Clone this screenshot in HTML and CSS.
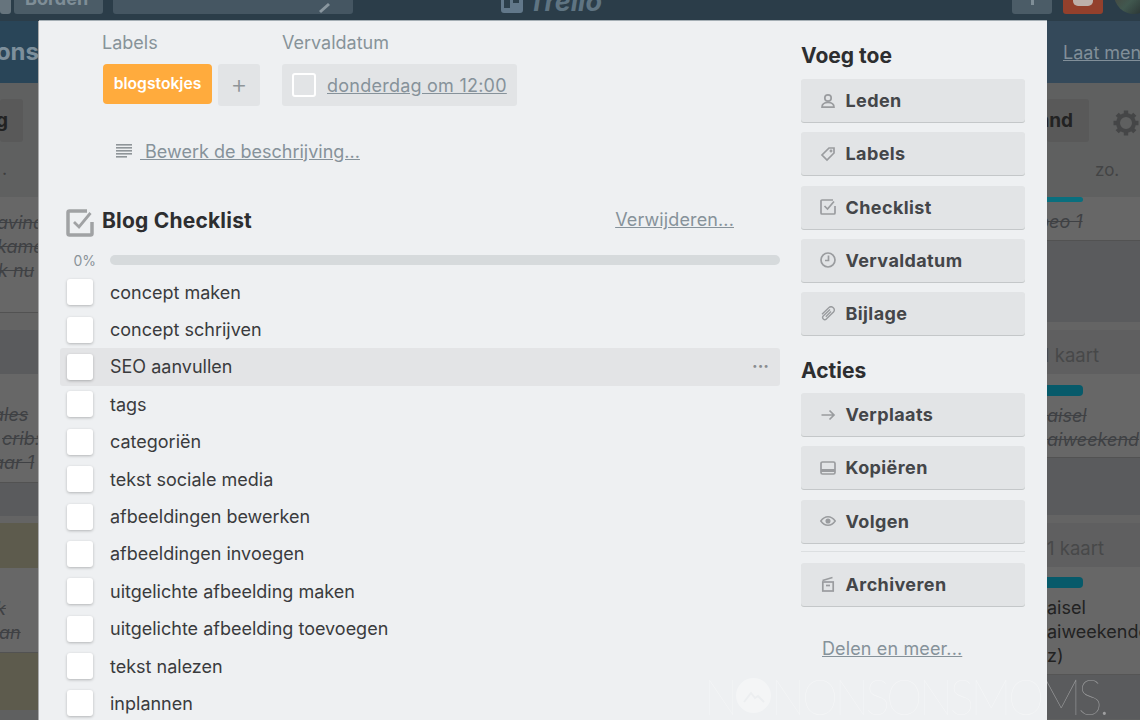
FILE: index.html
```html
<!DOCTYPE html>
<html lang="en">
<head>
    <meta charset="UTF-8">
    <title>Trello kaart</title>
    <link rel="stylesheet" href="styles.css">
</head>
<body>
    <header class="topbar">
        <div class="topLeft">
            <span class="topBtn homeBtn"></span>
            <span class="topBtn bordenBtn">Borden</span>
            <span class="topBtn searchBtn">
                <svg width="18" height="18" viewBox="0 0 18 18"><path d="M3 16L12 8" stroke="#8a979f" stroke-width="3" fill="none"/></svg>
            </span>
        </div>
        <div class="topLogo">
            <svg width="24" height="24" viewBox="0 0 24 24"><rect x="1" y="1" width="22" height="22" rx="3" fill="#62788a"/><rect x="4" y="4" width="6" height="14" fill="#2c3f4b"/><rect x="13" y="4" width="6" height="9" fill="#2c3f4b"/></svg>
            <span>Trello</span>
        </div>
        <div class="topRight">
            <span class="topBtn plusBtn"><span class="plusBar"></span></span>
            <span class="topBtn alertBtn"><span class="bell"></span></span>
            <span class="avatar"></span>
        </div>
    </header>

    <div class="stage">
        <div class="strip stripLeft">
            <div class="band bandLeft"><span class="boardName">Nonsons</span></div>
            <div class="listHead headLeft">
                <span class="boardBtn">Blog</span>
                <span class="dot">.</span>
            </div>
            <div class="card cardA">
                <div class="struck lineA">avinale</div>
                <div class="struck lineA">kamer</div>
                <div class="struck lineF">k nu</div>
            </div>
            <div class="gap h17"></div>
            <div class="gap dark h44"></div>
            <div class="card cardB">
                <div class="struck lineG">ales</div>
                <div class="struck lineC">crib:</div>
                <div class="struck lineG">aar 1</div>
            </div>
            <div class="gap dark h33"></div>
            <div class="gap h7"></div>
            <div class="khaki h45"></div>
            <div class="card cardC">
                <div class="struck lineD">k</div>
                <div class="struck lineE">an</div>
            </div>
            <div class="khaki h57"></div>
        </div>

        <main class="modal">
            <section class="mainCol">
                <div class="metaRow">
                    <div>
                        <h3 class="metaTitle">Labels</h3>
                        <div class="labelRow">
                            <span class="label">blogstokjes</span>
                            <span class="addLabel">+</span>
                        </div>
                    </div>
                    <div>
                        <h3 class="metaTitle">Vervaldatum</h3>
                        <div class="dueBox">
                            <span class="dueCheck"></span>
                            <a class="link dueLink">donderdag om 12:00</a>
                        </div>
                    </div>
                </div>

                <div class="descRow">
                    <svg width="16" height="14" viewBox="0 0 16 14" fill="#8f9599"><rect width="16" height="1.6"/><rect y="3" width="16" height="1.6"/><rect y="6" width="16" height="1.6"/><rect y="9" width="16" height="1.6"/><rect y="12" width="11" height="1.6"/></svg>
                    <a class="link descLink">&nbsp;Bewerk de beschrijving...</a>
                </div>

                <div class="checkHead">
                    <svg class="checkIcon" width="28" height="28" viewBox="0 0 28 28" fill="none" stroke="#a0a2a4"><path d="M21 2H3.500A1.500 1.500 0 0 0 2 3.500V24.500A1.500 1.500 0 0 0 3.500 26H24.500A1.500 1.500 0 0 0 26 24.500V13" stroke-width="3.500"/><path d="M8 13l5 5L24.500 4" stroke-width="2.800"/></svg>
                    <h2 class="checkTitle">Blog Checklist</h2>
                    <a class="link removeLink">Verwijderen...</a>
                </div>

                <div class="progress">
                    <span class="percent">0%</span>
                    <span class="bar"></span>
                </div>

                <ul class="items">
                    <li class="item"><span class="box"></span>concept maken</li>
                    <li class="item"><span class="box"></span>concept schrijven</li>
                    <li class="item itemHover"><span class="box"></span>SEO aanvullen<span class="more">···</span></li>
                    <li class="item"><span class="box"></span>tags</li>
                    <li class="item"><span class="box"></span>categoriën</li>
                    <li class="item"><span class="box"></span>tekst sociale media</li>
                    <li class="item"><span class="box"></span>afbeeldingen bewerken</li>
                    <li class="item"><span class="box"></span>afbeeldingen invoegen</li>
                    <li class="item"><span class="box"></span>uitgelichte afbeelding maken</li>
                    <li class="item"><span class="box"></span>uitgelichte afbeelding toevoegen</li>
                    <li class="item"><span class="box"></span>tekst nalezen</li>
                    <li class="item"><span class="box"></span>inplannen</li>
                </ul>
            </section>

            <aside class="sideCol">
                <h2 class="sideTitle">Voeg toe</h2>
                <div class="btnStack">
                    <div class="sideBtn">
                        <svg viewBox="0 0 16 16" fill="none" stroke="#9a9c9f" stroke-width="1.700"><circle cx="8" cy="5" r="3.200"/><path d="M2 14.200c0-3 2.500-4.700 6-4.700s6 1.700 6 4.700z"/></svg>Leden
                    </div>
                    <div class="sideBtn">
                        <svg viewBox="0 0 16 16" fill="none" stroke="#9a9c9f" stroke-width="1.700"><path d="M9 2h5v5l-7 7L2 9z"/><circle cx="11" cy="5" r=".6"/></svg>Labels
                    </div>
                    <div class="sideBtn">
                        <svg viewBox="0 0 16 16" fill="none" stroke="#9a9c9f" stroke-width="1.700"><path d="M13 1H2a1 1 0 0 0-1 1v12a1 1 0 0 0 1 1h12a1 1 0 0 0 1-1V7"/><path d="M4.500 7l3 3L14 2.500"/></svg>Checklist
                    </div>
                    <div class="sideBtn">
                        <svg viewBox="0 0 16 16" fill="none" stroke="#9a9c9f" stroke-width="1.700"><circle cx="8" cy="8" r="7"/><path d="M8.500 3.500V8.500H5"/></svg>Vervaldatum
                    </div>
                    <div class="sideBtn">
                        <svg viewBox="0 0 16 16" fill="none" stroke="#9a9c9f" stroke-width="1.400"><path d="M10 3.500L3.200 10a2.200 2.200 0 0 0 3.100 3.100L13.500 6a3.200 3.200 0 0 0-4.500-4.500L2 8.300"/><path d="M11 5.500L5.800 10.700"/></svg>Bijlage
                    </div>
                </div>

                <h2 class="sideTitle actionsTitle">Acties</h2>
                <div class="btnStack">
                    <div class="sideBtn">
                        <svg viewBox="0 0 16 16" fill="none" stroke="#9a9c9f" stroke-width="1.700"><path d="M1.500 8H14M9.500 3.500L14 8l-4.500 4.500"/></svg>Verplaats
                    </div>
                    <div class="sideBtn">
                        <svg viewBox="0 0 16 16" fill="none" stroke="#9a9c9f" stroke-width="1.700"><rect x="1" y="2" width="14" height="12" rx="1.500"/><path d="M1 10.500h14" stroke-width="3"/></svg>Kopiëren
                    </div>
                    <div class="sideBtn">
                        <svg viewBox="0 0 16 16" fill="none" stroke="#9a9c9f" stroke-width="1.500"><path d="M.8 8C3 5 5.300 3.800 8 3.800S13 5 15.200 8C13 11 10.700 12.200 8 12.200S3 11 .8 8z"/><circle cx="8" cy="8" r="1.800" fill="#9a9c9f"/></svg>Volgen
                    </div>
                </div>
                <hr class="sideRule">
                <div class="sideBtn">
                    <svg viewBox="0 0 16 16" fill="none" stroke="#9a9c9f" stroke-width="1.700"><path d="M2.500 4.500L12.500 1.500" stroke-width="1.400"/><rect x="2.800" y="6" width="10.400" height="9"/><path d="M6 9.500h4"/></svg>Archiveren
                </div>
                <a class="link shareLink">Delen en meer...</a>
            </aside>
        </main>

        <div class="strip stripRight">
            <div class="band bandRight"><a class="bandLink">Laat menu zien</a></div>
            <div class="listHead headRight">
                <div class="headTop">
                    <span class="boardBtn">and</span>
                    <svg class="gear" width="28" height="28" viewBox="0 0 28 28"><g stroke="#454647" stroke-width="4.400"><path d="M14 1.500v25M1.500 14h25M5.200 5.200l17.600 17.600M22.800 5.200L5.200 22.800"/></g><circle cx="14" cy="14" r="8" fill="#5f6060" stroke="#454647" stroke-width="4"/></svg>
                </div>
                <span class="dayName">zo.</span>
            </div>
            <div class="card cardD">
                <span class="teal tealThin"></span>
                <div class="struck rightLine">peo 1</div>
            </div>
            <div class="gap dark h81"></div>
            <div class="gap h8"></div>
            <div class="countRow firstCount"><span>1 kaart</span></div>
            <div class="card cardE">
                <span class="teal"></span>
                <div class="struck rightLine">aisel</div>
                <div class="struck rightLine">aiweekend</div>
            </div>
            <div class="gap dark h57"></div>
            <div class="gap h8"></div>
            <div class="countRow"><span>1 kaart</span></div>
            <div class="card cardF">
                <span class="teal"></span>
                <div class="plainLine">aisel</div>
                <div class="plainLine">aiweekende</div>
                <div class="plainLine">z)</div>
            </div>
            <div class="gap dark h44"></div>
        </div>
    </div>

    <div class="watermark">
        <span class="wmN">N</span>
        <svg class="wmLogo" width="35" height="35" viewBox="0 0 35 35"><circle cx="17.500" cy="17.500" r="17.500" fill="#fff" fill-opacity=".35"/><path d="M8 24l7-9 4 5 3-2 6 6" fill="none" stroke="#eceef0" stroke-width="2"/></svg>
        <span class="wmText">NONSONSMOMS.</span>
    </div>
</body>
</html>
```

FILE: styles.css
```css
* {
    box-sizing: border-box;
}

html,
body {
    margin: 0;
    height: 720px;
    overflow: hidden;
}

body {
    width: 1140px;
    background-color: #5f6060;
    color: #3a3b3d;
    font-family: Inter, "Noto Sans", sans-serif;
    font-size: 18px;
    position: relative;
}

h2,
h3,
ul,
hr {
    margin: 0;
    padding: 0;
}

.topbar {
    height: 21px;
    background-color: #2b3d49;
    display: flex;
    align-items: flex-end;
    justify-content: space-between;
    padding-bottom: 7px;
    overflow: hidden;
}

.topLeft,
.topRight {
    display: flex;
    align-items: flex-end;
    flex-shrink: 0;
}

.topLeft {
    width: 400px;
}

.topRight {
    width: 128px;
}

.topBtn {
    height: 32px;
    border-radius: 3px;
    background-color: #4b5c67;
    color: #7f8e97;
    font-weight: 700;
    flex-shrink: 0;
    display: flex;
    align-items: flex-end;
}

.homeBtn {
    width: 11px;
    margin-right: 3px;
    background-color: #66747d;
}

.bordenBtn {
    width: 89px;
    margin-right: 10px;
    padding-left: 11px;
    line-height: 30px;
    white-space: nowrap;
}

.searchBtn {
    width: 240px;
    background-color: #455662;
    justify-content: flex-end;
    padding: 0 18px 0 0;
}

.topLogo {
    display: flex;
    align-items: flex-end;
    gap: 4px;
    color: #5f7482;
    font-size: 27px;
    font-weight: 700;
    font-style: italic;
    line-height: 24px;
    margin-right: 310px;
}

.plusBtn {
    width: 40px;
    margin-right: 11px;
    background-color: #4b5c67;
    justify-content: center;
}

.plusBar {
    width: 3px;
    height: 5px;
    margin-bottom: 9px;
    background-color: #7f8e97;
}

.alertBtn {
    width: 40px;
    margin-right: 11px;
    background-color: #93402c;
    justify-content: center;
}

.bell {
    width: 20px;
    height: 6px;
    margin-bottom: 8px;
    background-color: #bdb0aa;
    border-radius: 0 0 5px 5px;
}

.avatar {
    width: 40px;
    height: 40px;
    border-radius: 50%;
    background: linear-gradient(135deg, #4a3a34, #41584f 55%, #1f2327);
    flex-shrink: 0;
}

.stage {
    display: flex;
    height: 699px;
}

.strip {
    overflow: hidden;
    flex-shrink: 0;
}

.stripLeft {
    width: 39px;
}

.stripRight {
    width: 93px;
}

.band {
    height: 62px;
    background-color: #2f4b5d;
    display: flex;
    align-items: center;
    white-space: nowrap;
}

.bandLeft {
    justify-content: flex-end;
    background-color: #294558;
}

.bandRight {
    background-color: #34495a;
    padding-left: 16px;
}

.boardName {
    color: #7d8f9b;
    font-size: 24px;
    font-weight: 700;
    flex-shrink: 0;
    margin-top: -1px;
}

.bandLink {
    color: #818f99;
    text-decoration: underline;
    flex-shrink: 0;
    margin-top: 1px;
}

.listHead {
    height: 114px;
    padding-top: 16px;
}

.boardBtn {
    display: block;
    height: 43px;
    line-height: 43px;
    border-radius: 3px;
    background-color: #595959;
    color: #222;
    font-weight: 700;
    font-size: 19px;
    white-space: nowrap;
}

.headLeft .boardBtn {
    width: 23px;
    padding-right: 15px;
    direction: rtl;
    overflow: hidden;
}

.dot {
    display: block;
    margin: 16px 0 0 2px;
    color: #3d3d3d;
}

.headTop {
    display: flex;
    align-items: flex-start;
}

.headRight .boardBtn {
    width: 42px;
    padding-right: 16px;
    direction: rtl;
    overflow: hidden;
}

.gear {
    margin: 10px 0 0 23px;
    flex-shrink: 0;
}

.dayName {
    display: block;
    margin: 18px 0 0 48px;
    color: #434445;
    font-size: 17px;
}

.card {
    background-color: #676767;
    border-bottom: 1px solid #525252;
    white-space: nowrap;
}

.cardA {
    height: 116px;
    padding-top: 14px;
}

.cardB {
    height: 109px;
    padding-top: 29px;
}

.cardC {
    height: 85px;
    padding-top: 29px;
}

.cardD {
    height: 44px;
}

.cardE {
    height: 84px;
    padding-top: 11px;
}

.cardF {
    height: 108px;
    padding-top: 10px;
    border-bottom: 1px solid #555;
}

.struck,
.plainLine {
    line-height: 24px;
    font-size: 18px;
}

.struck {
    color: #3f4144;
    font-style: italic;
    text-decoration: line-through;
}

.plainLine {
    color: #222;
}

.lineA {
    margin-left: -3px;
}

.lineC {
    margin-left: 2px;
}

.lineD {
    margin-left: -4px;
}

.lineE {
    margin-left: -1px;
}

.lineF {
    margin-left: -2px;
}

.lineG {
    margin-left: -7px;
}

.rightLine {
    margin-left: 0;
}

.cardD .rightLine {
    margin-top: 8px;
    margin-left: -9px;
}

.teal {
    display: block;
    width: 36px;
    height: 11px;
    margin-bottom: 8px;
    background-color: #075a6a;
    border-radius: 0 4px 4px 0;
}

.tealThin {
    height: 5px;
    margin-bottom: 0;
    background-color: #0a6f7e;
}

.gap {
    background-color: #646464;
}

.dark {
    background-color: #5a5b5d;
}

.khaki {
    background-color: #5d5b4d;
}

.h7 { height: 7px; }
.h8 { height: 8px; }
.h17 { height: 17px; }
.h33 { height: 33px; }
.h44 { height: 44px; }
.h45 { height: 45px; }
.h57 { height: 57px; }
.h81 { height: 81px; }

.countRow {
    height: 44px;
    padding-top: 3px;
    line-height: 44px;
    font-size: 18.500px;
    background-color: #5f5f60;
    color: #474849;
    white-space: nowrap;
    overflow: hidden;
}

.firstCount {
    margin-left: -5px;
}

.modal {
    width: 1008px;
    background-color: #eef0f2;
    padding: 0 22px 0 21px;
    display: flex;
    justify-content: space-between;
    box-shadow: -1px 0 0 #a8a9aa, 0 -1px 0 #a5afb5;
    overflow: hidden;
}

.mainCol {
    width: 720px;
    flex-shrink: 0;
}

.sideCol {
    width: 224px;
    flex-shrink: 0;
}

.metaRow {
    display: flex;
    gap: 22px;
    padding-left: 42px;
    padding-top: 11px;
}

.metaTitle {
    font-size: 18px;
    font-weight: 400;
    line-height: 22px;
    color: #879399;
    margin-bottom: 10px;
}

.labelRow {
    display: flex;
    gap: 6px;
    margin-left: 1px;
}

.label {
    width: 109px;
    height: 40px;
    line-height: 40px;
    text-align: center;
    background-color: #ffab3d;
    border-radius: 4px;
    color: #fff;
    font-size: 15.700px;
    font-weight: 600;
}

.addLabel {
    width: 42px;
    height: 42px;
    line-height: 40px;
    text-align: center;
    background-color: #e2e4e6;
    border-radius: 3px;
    color: #8f9599;
    font-size: 26px;
    font-weight: 300;
}

.dueBox {
    width: 235px;
    height: 42px;
    padding-left: 10px;
    display: flex;
    align-items: center;
    gap: 11px;
    background-color: #e2e4e6;
    border-radius: 3px;
}

.dueCheck {
    width: 24px;
    height: 24px;
    border: 2px solid #fff;
    border-radius: 3px;
}

.link {
    color: #86929a;
    text-decoration: underline;
    font-size: 18px;
    letter-spacing: .13px;
    white-space: nowrap;
}

.dueLink {
    letter-spacing: .24px;
}

.descLink {
    letter-spacing: 0;
}

.descRow {
    display: flex;
    align-items: center;
    gap: 8px;
    padding-left: 56px;
    margin-top: 33px;
    height: 24px;
}

.checkHead {
    display: flex;
    align-items: center;
    height: 30px;
    margin-top: 43px;
    padding-left: 6px;
}

.checkIcon {
    flex-shrink: 0;
    margin-top: 3px;
}

.checkTitle {
    font-size: 21px;
    font-weight: 700;
    letter-spacing: .2px;
    color: #2d2e30;
    margin-left: 8px;
    margin-top: -1px;
}

.removeLink {
    margin-left: auto;
    margin-right: 46px;
    margin-top: -3px;
}

.progress {
    display: flex;
    align-items: center;
    height: 16px;
    margin-top: 16px;
}

.percent {
    width: 50px;
    padding-right: 14px;
    text-align: right;
    font-size: 14px;
    color: #8a9399;
}

.bar {
    flex: 1;
    height: 10px;
    border-radius: 5px;
    background-color: #d6dadc;
}

.items {
    list-style: none;
    margin-top: 5.500px;
}

.item {
    height: 37.400px;
    display: flex;
    align-items: center;
    color: #3a3b3d;
    font-size: 18px;
    border-radius: 3px;
    padding-left: 7px;
}

.itemHover {
    background-color: #e3e4e6;
}

.box {
    width: 26px;
    height: 26px;
    margin-right: 17px;
    background-color: #fff;
    border-radius: 3px;
    box-shadow: 0 1px 3px rgba(0, 0, 0, .25);
    flex-shrink: 0;
}

.more {
    margin-left: auto;
    margin-right: 11px;
    color: #8a8d90;
    font-weight: 700;
    font-size: 17px;
    margin-top: -2px;
}

.sideTitle {
    font-size: 21px;
    font-weight: 700;
    line-height: 26px;
    color: #2d2e30;
    margin-top: 22px;
    margin-bottom: 10px;
}

.actionsTitle {
    margin-top: 23px;
    margin-bottom: 9px;
}

.btnStack {
    display: flex;
    flex-direction: column;
    gap: 10.300px;
}

.sideBtn {
    height: 43px;
    display: flex;
    align-items: center;
    padding-left: 19px;
    gap: 9.500px;
    background-color: #e2e4e6;
    border-radius: 3px;
    box-shadow: 0 1px 0 #c4c7c9;
    color: #444649;
    font-size: 18px;
    font-weight: 700;
    letter-spacing: .4px;
}

.sideBtn svg {
    width: 16px;
    height: 16px;
    flex-shrink: 0;
}

.sideRule {
    border: 0;
    border-top: 1px solid #dcdfe1;
    margin: 8px 0 11px;
}

.shareLink {
    display: block;
    margin: 32px 0 0 21px;
}

.watermark {
    position: absolute;
    left: 704px;
    top: 677px;
    display: flex;
    align-items: center;
    height: 36px;
    color: rgba(255, 255, 255, .42);
    font-family: Lato, Inter, sans-serif;
    font-size: 46px;
    font-weight: 100;
    letter-spacing: -3.500px;
    white-space: nowrap;
}

.wmN {
    width: 32px;
    transform: scaleY(1.1);
}

.wmText {
    transform: scaleY(1.1);
}

.wmLogo {
    flex-shrink: 0;
}
```
